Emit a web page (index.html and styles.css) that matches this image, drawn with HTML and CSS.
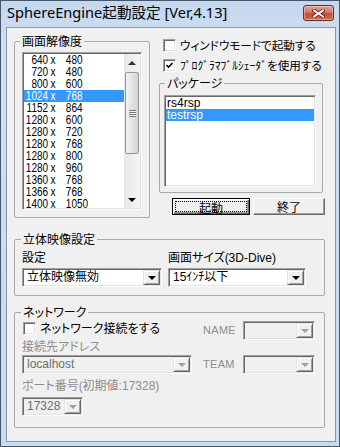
FILE: index.html
```html
<!DOCTYPE html>
<html lang="ja">
  <head>
    <meta charset="UTF-8" />
    <title>SphereEngine起動設定</title>
    <link rel="stylesheet" href="styles.css">
  </head>
  <body>
    <div class="window">
      <div class="titlebar">
        <span class="title">SphereEngine起動設定 [Ver,4.13]</span>
        <div class="close">
          <svg width="13" height="9" viewBox="0 0 13 9">
            <path d="M2 1.5 L11 7.5 M11 1.5 L2 7.5" stroke="#5b1b12" stroke-width="3.6" stroke-linecap="square" />
            <path d="M2 1.5 L11 7.5 M11 1.5 L2 7.5" stroke="#ffffff" stroke-width="2" stroke-linecap="square" />
          </svg>
        </div>
      </div>

      <div class="client">
        <div class="top">
          <fieldset class="group res">
            <legend>画面解像度</legend>
            <div class="listbox res-list">
              <div class="rows">
                <div class="row"><span class="line"><span class="w">640</span><span class="x">x</span><span>480</span></span></div>
                <div class="row"><span class="line"><span class="w">720</span><span class="x">x</span><span>480</span></span></div>
                <div class="row"><span class="line"><span class="w">800</span><span class="x">x</span><span>600</span></span></div>
                <div class="row sel"><span class="line"><span class="w">1024</span><span class="x">x</span><span>768</span></span></div>
                <div class="row"><span class="line"><span class="w">1152</span><span class="x">x</span><span>864</span></span></div>
                <div class="row"><span class="line"><span class="w">1280</span><span class="x">x</span><span>600</span></span></div>
                <div class="row"><span class="line"><span class="w">1280</span><span class="x">x</span><span>720</span></span></div>
                <div class="row"><span class="line"><span class="w">1280</span><span class="x">x</span><span>768</span></span></div>
                <div class="row"><span class="line"><span class="w">1280</span><span class="x">x</span><span>800</span></span></div>
                <div class="row"><span class="line"><span class="w">1280</span><span class="x">x</span><span>960</span></span></div>
                <div class="row"><span class="line"><span class="w">1360</span><span class="x">x</span><span>768</span></span></div>
                <div class="row"><span class="line"><span class="w">1366</span><span class="x">x</span><span>768</span></span></div>
                <div class="row"><span class="line"><span class="w">1400</span><span class="x">x</span><span>1050</span></span></div>
              </div>
              <div class="vscroll">
                <div class="sb-btn"><i class="tri up"></i></div>
                <div class="sb-thumb"><i class="grip"></i></div>
                <div class="sb-track"></div>
                <div class="sb-btn"><i class="tri down"></i></div>
              </div>
            </div>
          </fieldset>

          <div class="side">
            <div class="check">
              <span class="box"></span>
              <span>ウィンドウモードで起動する</span>
            </div>
            <div class="check">
              <span class="box">
                <svg width="7" height="7" viewBox="0 0 7 7">
                  <path d="M0.5 3 L2.5 5.2 L6.5 1" stroke="#000" stroke-width="1.6" fill="none" />
                </svg>
              </span>
              <span>ﾌﾟﾛｸﾞﾗﾏﾌﾞﾙｼｪｰﾀﾞを使用する</span>
            </div>

            <fieldset class="group pkg">
              <legend>パッケージ</legend>
              <div class="listbox pkg-list">
                <div class="row">rs4rsp</div>
                <div class="row sel">testrsp</div>
              </div>
            </fieldset>

            <div class="buttons">
              <div class="btn default"><span class="focus">起動</span></div>
              <div class="btn quit">終了</div>
            </div>
          </div>
        </div>

        <fieldset class="group stereo">
          <legend>立体映像設定</legend>
          <div class="stereo-cols">
            <div class="field first">
              <div class="label">設定</div>
              <div class="combo">
                <span class="combo-text">立体映像無効</span>
                <span class="drop"><i class="tri down"></i></span>
              </div>
            </div>
            <div class="field second">
              <div class="label">画面サイズ(3D-Dive)</div>
              <div class="combo">
                <span class="combo-text">15ｲﾝﾁ以下</span>
                <span class="drop"><i class="tri down"></i></span>
              </div>
            </div>
          </div>
        </fieldset>

        <fieldset class="group net">
          <legend>ネットワーク</legend>
          <div class="net-grid">
            <div class="check net-check">
              <span class="box"></span>
              <span>ネットワーク接続をする</span>
            </div>
            <div class="label off side-label">NAME</div>
            <div class="combo off small">
              <span class="combo-text"></span>
              <span class="drop"><i class="tri down"></i></span>
            </div>

            <div class="label off wide">接続先アドレス</div>

            <div class="combo off host">
              <span class="combo-text">localhost</span>
              <span class="drop"><i class="tri down"></i></span>
            </div>
            <div class="label off side-label">TEAM</div>
            <div class="combo off small">
              <span class="combo-text"></span>
              <span class="drop"><i class="tri down"></i></span>
            </div>

            <div class="label off wide port-label">ポート番号(初期値:17328)</div>

            <div class="combo off port">
              <span class="combo-text">17328</span>
              <span class="drop"><i class="tri down"></i></span>
            </div>
          </div>
        </fieldset>
      </div>
    </div>
  </body>
</html>
```

FILE: styles.css
```css
* {
  box-sizing: border-box;
}

body {
  margin: 0;
  background-color: #ffffff;
  font-family: "Liberation Sans", "Noto Sans CJK JP", sans-serif;
  font-size: 12px;
  font-feature-settings: "palt";
  color: #000000;
}

.window {
  width: 340px;
  height: 447px;
  border: 1px solid #48566a;
  background: linear-gradient(#c3d7ee, #cfdff2 40px, #c9dbef);
  padding: 0 3px 4px 5px;
  display: flex;
  flex-direction: column;
}

.titlebar {
  height: 26px;
  display: flex;
  justify-content: space-between;
  align-items: flex-start;
  padding: 0 2px 0 1px;
}

.title {
  font-family: "Noto Sans", "Noto Sans CJK JP", sans-serif;
  font-size: 14.6px;
  line-height: 26px;
  margin-top: -2px;
  color: #000000;
  font-feature-settings: normal;
}

.close {
  width: 31px;
  height: 16px;
  margin-top: 4px;
  border: 1px solid #6b2c22;
  border-radius: 3px;
  background: linear-gradient(#e6a596, #d47462 45%, #c24a35 55%, #d0705b);
  box-shadow: inset 0 0 0 1px rgba(255, 255, 255, 0.35);
  display: flex;
  align-items: center;
  justify-content: center;
}

.client {
  flex: 1;
  border: 1px solid #8797ac;
  background-color: #f0f0f0;
  padding: 6px 10px 0 7px;
}

.top {
  display: flex;
  gap: 9px;
}

/* group boxes */
.group {
  margin: 0;
  border: 1px solid #a8a8a8;
  border-radius: 2px;
  min-width: 0;
}

legend {
  padding: 0 2px;
  line-height: 14px;
  font-family: "Noto Sans CJK JP", sans-serif;
}

.res {
  width: 136px;
  padding: 4px 7px 7px 7px;
}

.res legend {
  margin-left: -2px;
}

/* sunken boxes */
.listbox,
.combo {
  border-style: solid;
  border-width: 1px;
  border-color: #a0a0a0 #ffffff #ffffff #a0a0a0;
  box-shadow: inset 1px 1px 0 #696969, inset -1px -1px 0 #e3e3e3;
  background-color: #ffffff;
}

.listbox {
  padding: 1px;
  overflow: hidden;
}

.res-list {
  height: 158px;
  display: flex;
}

.rows {
  flex: 1;
}

.row {
  height: 12px;
  line-height: 12px;
  white-space: nowrap;
  padding-left: 1px;
}

.row.sel {
  background-color: #3399ff;
  color: #ffffff;
}

.res-list .row {
  font-size: 13px;
}

/* the list font is a narrow one, so the line is squeezed */
.line {
  display: inline-block;
  transform: scaleX(0.77);
  transform-origin: left;
}

.line .w {
  display: inline-block;
  width: 30px;
  text-align: right;
}

.line .x {
  display: inline-block;
  width: 23px;
  padding-left: 3px;
}

.vscroll {
  width: 16px;
  display: flex;
  flex-direction: column;
  background: linear-gradient(90deg, #e6e6e6, #f6f6f6);
}

.sb-btn {
  height: 17px;
  display: flex;
  align-items: center;
  justify-content: center;
}

.sb-thumb {
  height: 82px;
  margin: 1px 1px 0 1px;
  border: 1px solid #979797;
  border-radius: 2px;
  background: linear-gradient(90deg, #f4f4f4, #e2e2e2 50%, #d4d4d4);
  display: flex;
  align-items: center;
  justify-content: center;
}

.grip {
  width: 7px;
  height: 7px;
  background: repeating-linear-gradient(#7a7a7a 0 1px, #f0f0f0 1px 2px);
}

.sb-track {
  flex: 1;
}

.tri {
  width: 0;
  height: 0;
  border-left: 4px solid transparent;
  border-right: 4px solid transparent;
}

.tri.up {
  border-bottom: 4px solid #333333;
}

.tri.down {
  border-top: 4px solid #000000;
}

/* right column */
.side {
  width: 166px;
  padding-top: 4px;
}

.check {
  display: flex;
  align-items: center;
  gap: 4px;
  line-height: 14px;
  font-family: "Noto Sans CJK JP", sans-serif;
  font-size: 11.6px;
  padding-left: 4px;
  white-space: nowrap;
}

.check + .check {
  margin-top: 6px;
}

.box {
  width: 13px;
  height: 13px;
  border-style: solid;
  border-width: 1px;
  border-color: #a0a0a0 #ffffff #ffffff #a0a0a0;
  box-shadow: inset 1px 1px 0 #696969, inset -1px -1px 0 #e3e3e3;
  background-color: #ffffff;
  display: flex;
  align-items: center;
  justify-content: center;
}

.pkg {
  margin: 4px 2px 0 0;
  padding: 5px 6px 5px 4px;
}

.pkg legend {
  margin-left: 1px;
}

.pkg-list {
  height: 92px;
}

.pkg-list .row {
  padding-left: 1px;
}

.buttons {
  display: flex;
  justify-content: flex-end;
  gap: 3px;
  margin-top: 5px;
}

.btn {
  height: 17px;
  font-family: "Noto Sans CJK JP", sans-serif;
  line-height: 13px;
  text-align: center;
  background-color: #f0f0f0;
  border-style: solid;
  border-width: 1px;
  border-color: #ffffff #696969 #696969 #ffffff;
  box-shadow: inset -1px -1px 0 #a0a0a0;
}

.default {
  width: 78px;
  border-color: #000000;
  box-shadow: inset 1px 1px 0 #ffffff, inset -1px -1px 0 #696969, inset -2px -2px 0 #a0a0a0;
  padding: 2px;
}

.focus {
  display: block;
  height: 11px;
  line-height: 11px;
  border: 1px dotted #000000;
}

.quit {
  width: 72px;
  padding-top: 1px;
}

/* stereo */
.stereo {
  margin-top: 14px;
  padding: 5px 7px 8px 7px;
}

.stereo legend,
.net legend {
  margin-left: -1px;
}

.stereo-cols {
  display: flex;
  gap: 6px;
}

.first {
  width: 140px;
}

.second {
  width: 138px;
}

.label {
  line-height: 14px;
  white-space: nowrap;
}

.field .combo {
  margin-top: 3px;
}

.combo {
  height: 19px;
  display: flex;
  align-items: center;
  padding: 1px;
}

.combo-text {
  flex: 1;
  padding-left: 3px;
  line-height: 15px;
  white-space: nowrap;
  overflow: hidden;
}

.drop {
  width: 17px;
  height: 15px;
  flex: none;
  background-color: #f0f0f0;
  border-style: solid;
  border-width: 1px;
  border-color: #e3e3e3 #696969 #696969 #e3e3e3;
  box-shadow: inset 1px 1px 0 #ffffff, inset -1px -1px 0 #a0a0a0;
  display: flex;
  align-items: center;
  justify-content: center;
}

/* network */
.net {
  margin-top: 9px;
  padding: 1px 7px 11px 7px;
}

.net-grid {
  display: grid;
  grid-template-columns: 181px 40px 72px;
  align-items: center;
}

.net-check {
  padding-left: 1px;
  align-self: start;
  margin-top: 1px;
  font-size: 12px;
}

.off {
  color: #8d8d8d;
}

.combo.off {
  background-color: #f0f0f0;
}

.combo.off .combo-text {
  color: #6d6d6d;
}

.combo.off .tri.down {
  border-top-color: #a0a0a0;
}

.small {
  margin-top: 1px;
}

.wide {
  grid-column: 1 / 4;
}

.host {
  width: 170px;
  margin-top: 1px;
}

.side-label {
  font-size: 11px;
  letter-spacing: 0.3px;
}

.port-label {
  margin-top: 5px;
}

.port {
  width: 61px;
  margin-top: 4px;
  grid-column: 1 / 2;
}
```
